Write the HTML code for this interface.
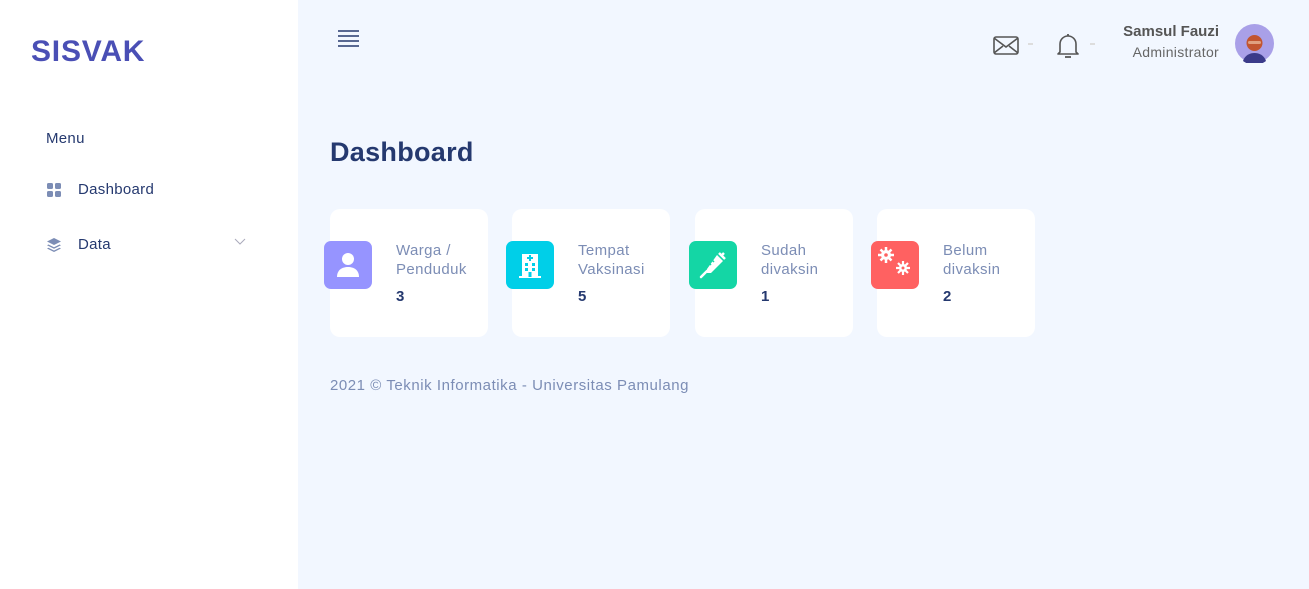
<!DOCTYPE html>
<html><head><meta charset="utf-8"><style>
*{margin:0;padding:0;box-sizing:border-box}
body{width:1309px;height:589px;overflow:hidden;background:#f2f7ff;font-family:"Liberation Sans",sans-serif;position:relative}
.side{position:absolute;left:0;top:0;width:298px;height:589px;background:#fff}
.logo{position:absolute;left:31px;top:35px;font-size:30px;font-weight:bold;color:#4a4fb5;letter-spacing:0.8px}
.menu{position:absolute;left:46px;top:130px;font-size:15px;color:#25396f;letter-spacing:.3px}
.item{position:absolute;left:46px;font-size:15px;color:#25396f;display:flex;align-items:center;letter-spacing:.3px}
.item span{margin-left:16px}
.main-title{position:absolute;left:330px;top:137px;font-size:27px;font-weight:bold;color:#25396f;letter-spacing:.3px}
.card{position:absolute;top:209px;width:158px;height:128px;background:#fff;border-radius:10px}
.ic{position:absolute;top:241px;width:48px;height:48px;border-radius:7px;display:flex;align-items:center;justify-content:center}
.lbl{position:absolute;top:241px;font-size:15px;line-height:19px;color:#7c8db5;letter-spacing:.4px}
.num{position:absolute;top:288px;font-size:15px;font-weight:bold;color:#25396f}
.foot{position:absolute;left:330px;top:377px;font-size:15px;color:#7c8db5;letter-spacing:.55px}
</style></head><body>
<div class="side">
<div class="logo">SISVAK</div>
<div class="menu">Menu</div>
<div class="item" style="top:181px"><svg width="16" height="16" viewBox="0 0 16 16" fill="#7c8db5"><rect x="1" y="1" width="6" height="6" rx="1.5"/><rect x="9" y="1" width="6" height="6" rx="1.5"/><rect x="1" y="9" width="6" height="6" rx="1.5"/><rect x="9" y="9" width="6" height="6" rx="1.5"/></svg><span>Dashboard</span></div>
<div class="item" style="top:236px"><svg width="16" height="16" viewBox="0 0 16 16" fill="#7c8db5"><path d="M8 1l7 3.5-7 3.5-7-3.5z"/><path d="M2.5 7.5L8 10.3l5.5-2.8L15 8.3 8 11.8 1 8.3z"/><path d="M2.5 10.7L8 13.5l5.5-2.8 1.5.8L8 15 1 11.5z"/></svg><span>Data</span></div>
<svg style="position:absolute;left:234px;top:238px" width="12" height="8" viewBox="0 0 12 8"><path d="M1 1l5 5 5-5" stroke="#aab" fill="none"/></svg>
</div>
<svg style="position:absolute;left:338px;top:30px" width="22" height="17" viewBox="0 0 22 17"><path d="M0 1h21M0 6h21M0 11h21M0 16h21" stroke="#25396f" stroke-width="1.6"/></svg>
<svg style="position:absolute;left:993px;top:36px" width="26" height="19" viewBox="0 0 26 19"><rect x="1" y="1" width="24" height="17" rx="2" stroke="#555" stroke-width="1.6" fill="none"/><path d="M1 2l12 9 12-9M1 17l9-7M25 17l-9-7" stroke="#555" stroke-width="1.6" fill="none"/></svg>
<div style="position:absolute;left:1028px;top:43px;width:5px;height:2px;background:#ddd"></div>
<svg style="position:absolute;left:1057px;top:33px" width="22" height="26" viewBox="0 0 22 26"><path d="M3 19V11a8 8 0 0 1 16 0v8l2 2H1z" stroke="#555" stroke-width="1.6" fill="none" stroke-linejoin="round"/><path d="M11 1v2M8 24h6" stroke="#555" stroke-width="1.8"/></svg>
<div style="position:absolute;left:1090px;top:43px;width:5px;height:2px;background:#ddd"></div>
<div style="position:absolute;right:90px;top:23px;font-size:15px;font-weight:bold;color:#555;text-align:right">Samsul Fauzi</div>
<div style="position:absolute;right:90px;top:44px;font-size:14px;color:#666;text-align:right;letter-spacing:.3px">Administrator</div>
<svg style="position:absolute;left:1235px;top:24px" width="39" height="39" viewBox="0 0 39 39"><circle cx="19.5" cy="19.5" r="19.5" fill="#a9a0e8"/><path d="M8 37c2-6 7-8 11.5-8s9.5 2 11.5 8a19 19 0 0 1-23 0z" fill="#3b3b8a"/><circle cx="19.5" cy="19" r="8" fill="#c25530"/><rect x="13" y="17" width="13" height="3" rx="1.5" fill="#e0a080"/></svg>
<div class="main-title">Dashboard</div>

<div class="card" style="left:330px"></div>
<div class="card" style="left:512px"></div>
<div class="card" style="left:695px"></div>
<div class="card" style="left:877px"></div>

<div class="ic" style="left:324px;background:#9694ff"><svg width="24" height="26" viewBox="0 0 24 26" fill="#fff"><circle cx="12" cy="7" r="6"/><path d="M1 25c0-7 5-10 11-10s11 3 11 10z"/></svg></div>
<div class="ic" style="left:506px;background:#00cfe8"><svg width="24" height="28" viewBox="0 0 24 28" fill="#fff"><path d="M4 3h16v23H4z"/><rect x="1" y="25" width="22" height="2"/><g fill="#00cfe8"><rect x="11" y="4" width="2" height="6"/><rect x="9" y="6" width="6" height="2"/><rect x="7" y="12" width="3" height="3"/><rect x="14" y="12" width="3" height="3"/><rect x="7" y="17" width="3" height="3"/><rect x="14" y="17" width="3" height="3"/><rect x="10.5" y="21" width="3" height="5"/></g></svg></div>
<div class="ic" style="left:689px;background:#14d6a5"><svg width="30" height="30" viewBox="0 0 30 30" fill="#fff"><path d="M19 5l6 6-12 12-4 0 0-4z"/><path d="M9 21l-6 6" stroke="#fff" stroke-width="2.5" stroke-linecap="round"/><path d="M21 3l6 6M23 6l3-3" stroke="#fff" stroke-width="2.5"/><path d="M14 10l2 2M11 13l2 2" stroke="#14d6a5" stroke-width="1.5"/></svg></div>
<div class="ic" style="left:871px;background:#ff6161;align-items:flex-start;justify-content:flex-start"><svg width="48" height="48" viewBox="0 0 48 48" fill="#fff"><circle cx="15" cy="14" r="5"/><g stroke="#fff" stroke-width="2.5"><path d="M15 6v16M7 14h16M9.5 8.5l11 11M20.5 8.5l-11 11"/></g><circle cx="32" cy="27" r="4"/><g stroke="#fff" stroke-width="2.2"><path d="M32 20v14M25 27h14M27 22l10 10M37 22l-10 10"/></g><circle cx="15" cy="14" r="1.8" fill="#ff6161"/><circle cx="32" cy="27" r="1.5" fill="#ff6161"/></svg></div>

<div class="lbl" style="left:396px">Warga /<br>Penduduk</div>
<div class="lbl" style="left:578px">Tempat<br>Vaksinasi</div>
<div class="lbl" style="left:761px">Sudah<br>divaksin</div>
<div class="lbl" style="left:943px">Belum<br>divaksin</div>
<div class="num" style="left:396px">3</div>
<div class="num" style="left:578px">5</div>
<div class="num" style="left:761px">1</div>
<div class="num" style="left:943px">2</div>

<div class="foot">2021 © Teknik Informatika - Universitas Pamulang</div>
</body></html>
